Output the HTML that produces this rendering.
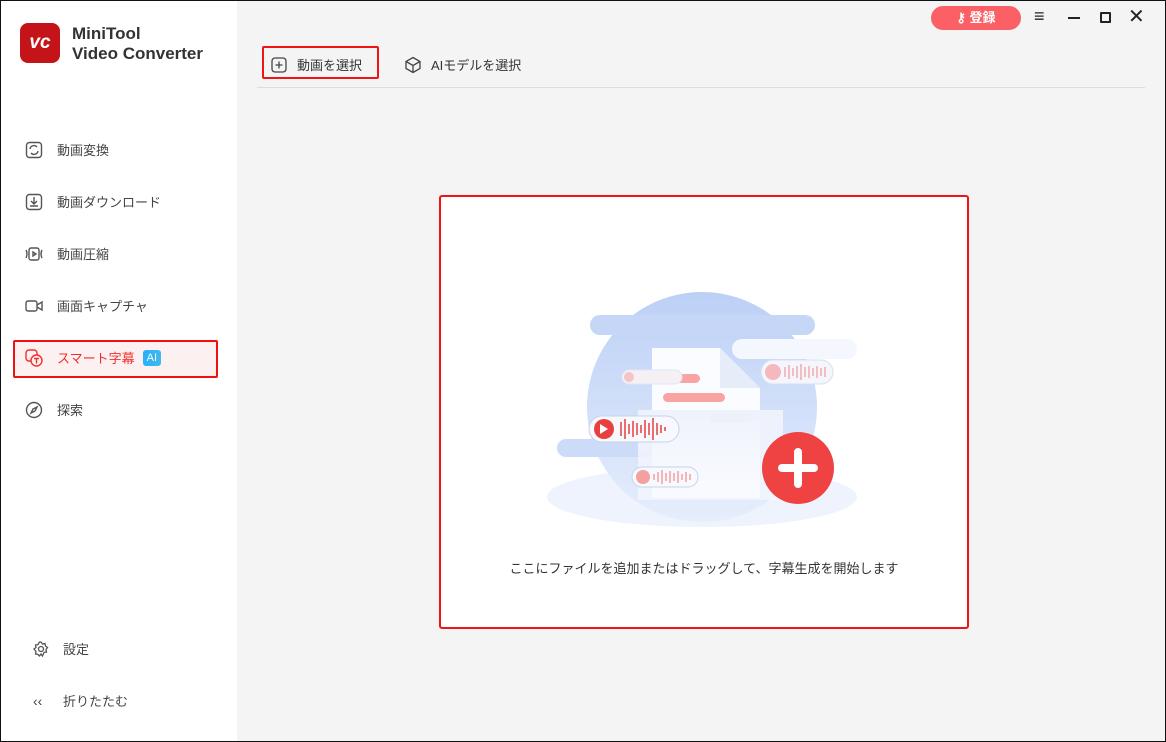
<!DOCTYPE html>
<html><head><meta charset="utf-8"><style>
*{margin:0;padding:0;box-sizing:border-box}
body{width:1166px;height:742px;overflow:hidden;font-family:"Liberation Sans","Noto Sans CJK JP",sans-serif;background:#f4f4f4;position:relative}
.frame{position:absolute;inset:0;border:1px solid #111;pointer-events:none;z-index:10}
.side{position:absolute;left:0;top:0;width:237px;height:742px;background:#fff}
.logo{position:absolute;left:20px;top:23px;width:40px;height:40px;border-radius:8px;background:#c4141a;color:#fff;font-weight:bold;font-style:italic;font-size:19px;text-align:center;line-height:40px}
.title{position:absolute;left:72px;top:24px;font-size:17px;font-weight:bold;color:#333;line-height:20px}
.nav{position:absolute;left:25px;font-size:13px;color:#444;display:flex;align-items:center}
.nav svg{margin-right:14px}
.sel{position:absolute;left:13px;top:340px;width:205px;height:38px;border:2px solid #f01010;border-radius:2px;background:#fdf0f0}
.ai{display:inline-block;background:linear-gradient(90deg,#26b0ff,#3fb9e8);color:#fff;font-size:11px;padding:1px 4px;border-radius:3px;margin-left:8px;line-height:14px}
.tb{position:absolute;top:55px;font-size:13px;color:#333;display:flex;align-items:center}
.drop{position:absolute;left:439px;top:195px;width:530px;height:434px;background:#fff;border:2px solid #f01414;border-radius:3px}
</style></head><body>
<div class="side">
<div class="logo">vc</div>
<div class="title">MiniTool<br>Video Converter</div>
<div class="nav" style="top:140px"><svg width="18" height="18" viewBox="0 0 18 18" fill="none" stroke="#555" stroke-width="1.4"><rect x="1.5" y="1.5" width="15" height="15" rx="3"/><path d="M5 8a4 4 0 0 1 7-2M13 10a4 4 0 0 1-7 2"/></svg>動画変換</div>
<div class="nav" style="top:192px"><svg width="18" height="18" viewBox="0 0 18 18" fill="none" stroke="#555" stroke-width="1.4"><rect x="1.5" y="1.5" width="15" height="15" rx="3"/><path d="M9 4v7M6 8l3 3 3-3M5 13h8"/></svg>動画ダウンロード</div>
<div class="nav" style="top:244px"><svg width="18" height="18" viewBox="0 0 18 18" fill="none" stroke="#555" stroke-width="1.4"><path d="M1 5q2 4 0 8M17 5q-2 4 0 8"/><rect x="4" y="3" width="10" height="12" rx="2"/><path d="M8 7l3 2-3 2z"/></svg>動画圧縮</div>
<div class="nav" style="top:296px"><svg width="18" height="18" viewBox="0 0 18 18" fill="none" stroke="#555" stroke-width="1.4"><rect x="1" y="4" width="11" height="10" rx="2"/><path d="M12 8l5-3v8l-5-3"/></svg>画面キャプチャ</div>
<div class="sel"></div>
<div class="nav" style="top:348px;color:#f03030"><svg width="18" height="18" viewBox="0 0 18 18" fill="none" stroke="#f03030" stroke-width="1.4"><rect x="1" y="1" width="11" height="11" rx="3"/><circle cx="11.5" cy="11.5" r="5.5" fill="#fdf0f0"/><path d="M9 9.5h5M11.5 9.5v5"/></svg>スマート字幕<span class="ai">AI</span></div>
<div class="nav" style="top:400px"><svg width="18" height="18" viewBox="0 0 18 18" fill="none" stroke="#555" stroke-width="1.4"><circle cx="9" cy="9" r="7.5"/><path d="M12 6l-2 4-4 2 2-4z"/></svg>探索</div>
<div class="nav" style="top:639px;left:33px"><svg width="16" height="16" viewBox="0 0 16 16" fill="none" stroke="#555" stroke-width="1.3"><circle cx="8" cy="8" r="2.5"/><path d="M8 1l1.5 2 2.5-.5.5 2.5 2 1.5-1.5 2 .5 2.5-2.5.5L9.5 15 8 13l-1.5 2-1.5-1.5-2.5-.5.5-2.5L1 8l2-1.5L2.5 4 5 3.5 6.5 1z"/></svg>設定</div>
<div class="nav" style="top:691px;left:33px"><span style="width:16px;margin-right:14px;font-size:14px">&lsaquo;&lsaquo;</span>折りたたむ</div>
</div>
<div style="position:absolute;left:931px;top:6px;width:90px;height:24px;border-radius:12px;background:#fa6066;color:#fff;font-size:13px;font-weight:bold;text-align:center;line-height:24px">⚷ 登録</div>
<div style="position:absolute;left:1034px;top:6px;font-size:18px;color:#222">≡</div>
<div style="position:absolute;left:1068px;top:17px;width:12px;height:2px;background:#222"></div>
<div style="position:absolute;left:1100px;top:12px;width:11px;height:11px;border:2px solid #222;border-radius:1px"></div>
<div style="position:absolute;left:1128px;top:4px;font-size:20px;color:#222">✕</div>
<div style="position:absolute;left:262px;top:46px;width:117px;height:33px;border:2px solid #f01414;border-radius:2px"></div>
<div class="tb" style="left:271px"><svg width="16" height="16" viewBox="0 0 16 16" fill="none" stroke="#444" stroke-width="1.3"><rect x="1" y="1" width="14" height="14" rx="3"/><path d="M8 4.5v7M4.5 8h7"/></svg><span style="margin-left:10px">動画を選択</span></div>
<div class="tb" style="left:404px"><svg width="18" height="18" viewBox="0 0 18 18" fill="none" stroke="#444" stroke-width="1.3"><path d="M9 1.5l7 4v7l-7 4-7-4v-7z"/><path d="M2 5.5l7 4 7-4M9 9.5v7"/></svg><span style="margin-left:9px">AIモデルを選択</span></div>
<div style="position:absolute;left:257px;top:87px;width:888px;height:1px;background:#ddd"></div>
<div class="drop">
<svg style="position:absolute;left:101px;top:85px" width="330" height="250" viewBox="0 0 330 250">
<defs><linearGradient id="g" x1="0" y1="0" x2="0" y2="1"><stop offset="0" stop-color="#bcd0f6"/><stop offset="1" stop-color="#e6eefc"/></linearGradient>
<linearGradient id="f" x1="0" y1="0" x2="0" y2="1"><stop offset="0" stop-color="#eef2fb"/><stop offset="1" stop-color="#f8faff" stop-opacity=".6"/></linearGradient></defs>
<ellipse cx="160" cy="215" rx="155" ry="30" fill="#eef3fd"/>
<circle cx="160" cy="125" r="115" fill="url(#g)"/>
<rect x="48" y="33" width="225" height="20" rx="10" fill="#c5d6f6"/>
<rect x="190" y="57" width="125" height="20" rx="10" fill="#f4f7fd"/>
<rect x="15" y="157" width="120" height="18" rx="9" fill="#ccdbf7"/>
<path d="M110 66h68l40 40v110H110z" fill="#fbfcff"/>
<path d="M178 66v40h40z" fill="#e6ecf8"/>
<rect x="120" y="92" width="38" height="9" rx="4.5" fill="#f9a3a3"/>
<rect x="121" y="111" width="62" height="9" rx="4.5" fill="#f9a3a3"/>
<rect x="168" y="132" width="42" height="9" rx="4.5" fill="#efb7bc"/>
<rect x="96" y="128" width="145" height="90" fill="url(#f)"/>
<rect x="80" y="88" width="60" height="14" rx="7" fill="#f4f0f4" stroke="#dfe6f3"/>
<circle cx="87" cy="95" r="5" fill="#f3c5c8"/>
<rect x="219" y="78" width="72" height="24" rx="12" fill="#f4f6fc" stroke="#d7dff0"/>
<circle cx="231" cy="90" r="8" fill="#f4b8bd"/>
<path d="M243 85v10M247 83v14M251 86v8M255 84v12M259 82v16M263 85v10M267 84v12M271 86v8M275 84v12M279 86v8M283 85v10" stroke="#f2a9b0" stroke-width="1.5"/>
<rect x="47" y="134" width="90" height="26" rx="13" fill="#f7f9fe" stroke="#c6d2ea"/>
<circle cx="62" cy="147" r="10" fill="#e84040"/><path d="M58 142v10l8-5z" fill="#fff"/>
<path d="M79 140v14M83 137v20M87 142v10M91 139v16M95 141v12M99 143v8M103 138v18M107 141v12M111 136v22M115 141v12M119 143v8M123 145v4" stroke="#e84b4b" stroke-width="1.6"/>
<rect x="90" y="185" width="66" height="20" rx="10" fill="#f7f9fe" stroke="#c6d2ea"/>
<circle cx="101" cy="195" r="7" fill="#f5a0a0"/>
<path d="M112 192v6M116 190v10M120 188v14M124 191v8M128 189v12M132 191v8M136 189v12M140 192v6M144 190v10M148 192v6" stroke="#f2a0a0" stroke-width="1.5"/>
<circle cx="256" cy="186" r="36" fill="#ef4343"/>
<path d="M256 170v32M240 186h32" stroke="#fff" stroke-width="8" stroke-linecap="round"/>
</svg>
<div style="position:absolute;left:0;right:0;top:361px;text-align:center;font-size:13px;color:#333">ここにファイルを追加またはドラッグして、字幕生成を開始します</div>
</div>
<div class="frame"></div>
</body></html>
